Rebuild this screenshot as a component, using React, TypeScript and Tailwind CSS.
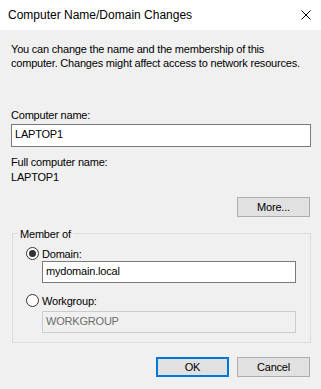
import React from "react";

function Radio({ checked }: { checked?: boolean }) {
  return (
    <div className="w-[13px] h-[13px] rounded-full border border-[#333333] bg-white flex items-center justify-center shrink-0">
      {checked && <div className="w-[7px] h-[7px] rounded-full bg-[#333333]" />}
    </div>
  );
}

export default function App() {
  return (
    <div
      className="w-[321px] h-[389px] bg-[#f0f0f0] flex flex-col text-black overflow-hidden"
      style={{ fontFamily: '"Liberation Sans", Arial, sans-serif' }}
    >
      {/* Title bar */}
      <div className="h-[30px] bg-white flex items-center justify-between shrink-0">
        <div className="pl-[8px] text-[12px] leading-[30px] text-black">Computer Name/Domain Changes</div>
        <svg width="10" height="10" viewBox="0 0 10 10" className="mr-[10px]">
          <path d="M0.5 0.5 L9.5 9.5 M9.5 0.5 L0.5 9.5" stroke="#000" strokeWidth="1" fill="none" />
        </svg>
      </div>

      <div className="flex flex-col pl-[11px] pr-[10px] text-[11px] leading-[14px] tracking-[-0.2px]">
        <p className="mt-[11.5px]">
          You can change the name and the membership of this
          <br />
          computer. Changes might affect access to network resources.
        </p>

        <div className="mt-[38.7px]">Computer name:</div>
        <div className="mt-[2px] h-[23px] border border-[#7a7a7a] bg-white pl-[3px] pt-[2px]">LAPTOP1</div>

        <div className="mt-[8px]">Full computer name:</div>
        <div className="mt-[1px]">LAPTOP1</div>

        <div className="mt-[13px] self-end mr-[1px] w-[73px] h-[20px] border border-[#adadad] bg-[#e1e1e1] flex items-center justify-center">
          More...
        </div>

        {/* Group box */}
        <div className="relative mt-[16px] ml-[1px] h-[110px] border border-[#dcdcdc] flex flex-col pl-[13px] pt-[13px]">
          <div className="absolute left-[5px] top-[-7.5px] px-[2px] bg-[#f0f0f0] leading-[14px]">Member of</div>

          <div className="flex items-center h-[13px]">
            <Radio checked />
            <span className="ml-[3px]">Domain:</span>
          </div>
          <div className="mt-[1px] ml-[16px] w-[254px] h-[22px] border border-[#7a7a7a] bg-white pl-[3px] pt-[2px]">
            mydomain.local
          </div>

          <div className="mt-[11px] flex items-center h-[13px]">
            <Radio />
            <span className="ml-[3px]">Workgroup:</span>
          </div>
          <div className="mt-[4px] ml-[16px] w-[254px] h-[22px] border border-[#cccccc] bg-[#f0f0f0] pl-[3px] pt-[2px] text-[#6d6d6d]">
            WORKGROUP
          </div>
        </div>

        <div className="mt-[14px] flex justify-end gap-[8px] mr-[1px]">
          <div className="w-[73px] h-[20px] border-2 border-[#0078d7] bg-[#e1e1e1] flex items-center justify-center">
            OK
          </div>
          <div className="w-[73px] h-[20px] border border-[#adadad] bg-[#e1e1e1] flex items-center justify-center">
            Cancel
          </div>
        </div>
      </div>
    </div>
  );
}
